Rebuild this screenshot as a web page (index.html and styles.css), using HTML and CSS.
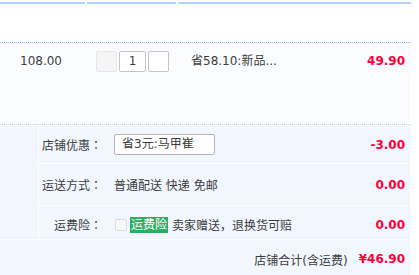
FILE: index.html
```html
<!DOCTYPE html>
<html lang="zh-CN">
<head>
    <meta charset="UTF-8">
    <title>确认订单</title>
    <link rel="stylesheet" href="styles.css">
</head>
<body>
    <div class="order">
        <!-- column header bar -->
        <div class="top-bar">
            <span class="seg seg1"></span>
            <span class="seg seg2"></span>
            <span class="seg seg3"></span>
        </div>

        <!-- item row -->
        <div class="item-row">
            <div class="unit-price">108.00</div>
            <div class="quantity">
                <span class="qty-btn minus"></span>
                <span class="qty-input">1</span>
                <span class="qty-btn plus"></span>
            </div>
            <div class="promo">省58.10:新品...</div>
            <div class="price">49.90</div>
        </div>

        <!-- shop options -->
        <div class="shop">
            <div class="shop-body">
                <div class="shop-side"></div>
                <div class="shop-rows">
                    <div class="opt-row row-coupon">
                        <span class="opt-label">店铺优惠<span class="colon" lang="zh-TW">：</span></span>
                        <span class="opt-value"><span class="select">省3元:马甲崔</span></span>
                        <span class="amount">-3.00</span>
                    </div>
                    <div class="opt-row row-ship">
                        <span class="opt-label">运送方式<span class="colon" lang="zh-TW">：</span></span>
                        <span class="opt-value">普通配送 快递 免邮</span>
                        <span class="amount">0.00</span>
                    </div>
                    <div class="opt-row row-ins">
                        <span class="opt-label">运费险<span class="colon" lang="zh-TW">：</span></span>
                        <span class="opt-value">
                            <span class="checkbox"></span>
                            <span class="ins-tag">运费险</span>
                            卖家赠送，退换货可赔
                        </span>
                        <span class="amount">0.00</span>
                    </div>
                </div>
            </div>
            <div class="shop-total">
                <span class="total-label">店铺合计(含运费)</span>
                <span class="total-price">¥46.90</span>
            </div>
        </div>
    </div>
</body>
</html>
```

FILE: styles.css
```css
* {
    margin: 0;
    padding: 0;
    box-sizing: border-box;
}

body {
    font-family: "DejaVu Sans", "Noto Sans CJK SC", sans-serif;
    font-size: 12px;
    color: #3c3c3c;
    background: #fff;
}

.order {
    width: 411px;
}

.top-bar {
    display: flex;
    gap: 2px;
    margin-top: 2px;
    height: 2px;
}

.seg {
    height: 2px;
    background: #b2d1ff;
}

.seg1 { width: 85px; }
.seg2 { width: 89px; }
.seg3 { flex: 1; }

.item-row {
    display: flex;
    align-items: flex-start;
    margin-top: 38px;
    height: 83px;
    padding-top: 8px;
    background: #fbfcff;
    border-top: 1px dotted #80b2ff;
    border-bottom: 1px dotted #c8c8c8;
}

.unit-price {
    width: 96px;
    padding-left: 20px;
    line-height: 20px;
}

.quantity {
    display: flex;
    gap: 1px;
    width: 95px;
}

.qty-btn,
.qty-input {
    height: 21px;
    border: 1px solid #c4c4c4;
    border-radius: 2px;
    background: #fff;
}

.qty-btn {
    width: 21px;
}

.minus {
    background: #f5f5f5;
    border-color: #e6e6e6;
    margin-right: 1px;
}

.plus {
    margin-left: 1px;
}

.qty-input {
    width: 27px;
    text-align: center;
    line-height: 19px;
}

.promo {
    flex: 1;
    line-height: 20px;
}

.price {
    padding-right: 6px;
    line-height: 20px;
    color: #ff0036;
    font-weight: bold;
}

.shop {
    width: 410px;
    margin-top: 1px;
    background: #f2f7ff;
}

.shop-body {
    display: flex;
    border-bottom: 1px solid #fff;
}

.shop-side {
    width: 39px;
    border-right: 1px solid #fff;
}

.shop-rows {
    flex: 1;
}

.opt-row {
    display: flex;
    align-items: center;
}

.opt-row + .opt-row {
    border-top: 1px solid #fff;
}

.row-coupon { height: 37px; }
.row-ship { height: 42px; }
.row-ins { height: 34px; padding-top: 4px; }

.opt-label {
    width: 63px;
    text-align: right;
    margin-right: 12px;
    font-family: "Noto Sans CJK SC", sans-serif;
}

.colon {
    font-family: "Noto Sans CJK TC", sans-serif;
}

.opt-value {
    flex: 1;
    display: flex;
    align-items: center;
}

.select {
    display: inline-block;
    width: 101px;
    height: 21px;
    padding-left: 7px;
    line-height: 19px;
    background: #fff;
    border: 1px solid #b4b4b4;
    border-radius: 2px;
}

.checkbox {
    display: inline-block;
    width: 12px;
    height: 12px;
    margin: 0 3px 0 1px;
    background: #f8f8f8;
    border: 1px solid #dcdcdc;
    border-radius: 2px;
}

.ins-tag {
    display: inline-block;
    margin-right: 4px;
    padding: 0 1px;
    line-height: 16px;
    color: #fff;
    background: #2eae63;
}

.amount {
    padding-right: 5px;
    color: #ff0036;
    font-weight: bold;
}

.shop-total {
    display: flex;
    justify-content: flex-end;
    align-items: center;
    gap: 11px;
    height: 36px;
    padding: 2px 5px 0 0;
}

.total-price {
    color: #ff0036;
    font-weight: bold;
}
```
